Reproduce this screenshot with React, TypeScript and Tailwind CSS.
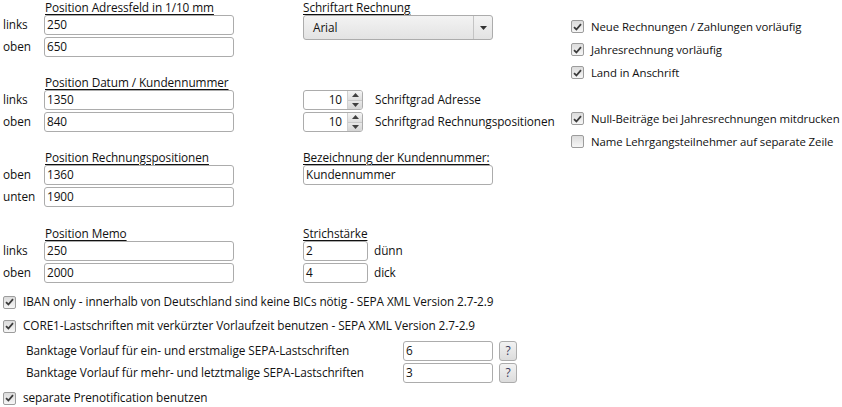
import type { ReactNode } from "react";

const FONT = "font-['Open_Sans','Noto_Sans',sans-serif]";

function Heading({ children, className = "" }: { children: ReactNode; className?: string }) {
  return (
    <div className={`h-[15px] whitespace-nowrap leading-[15px] underline underline-offset-[2px] ${className}`}>
      {children}
    </div>
  );
}

function TextBox({ value, className = "" }: { value: string; className?: string }) {
  return (
    <div
      className={`flex h-[20px] shrink-0 items-center rounded-[3px] border border-[#acacac] bg-white px-[2px] leading-none ${className}`}
    >
      {value}
    </div>
  );
}

function Spinner({ value }: { value: string }) {
  return (
    <div className="flex h-[20px] w-[60px] shrink-0 overflow-hidden rounded-[3px] border border-[#acacac] bg-white">
      <div className="flex flex-1 items-center justify-end pr-[5px] leading-none">{value}</div>
      <div className="flex w-[15px] flex-col border-l border-[#d0d0d0]">
        <div className="flex flex-1 items-center justify-center bg-gradient-to-b from-[#f4f4f4] to-[#dedede]">
          <svg width="7" height="4" viewBox="0 0 7 4">
            <path d="M0 4 L3.5 0 L7 4 Z" fill="#404040" />
          </svg>
        </div>
        <div className="flex flex-1 items-center justify-center border-t border-[#c8c8c8] bg-gradient-to-b from-[#e8e8e8] to-[#d4d4d4]">
          <svg width="7" height="4" viewBox="0 0 7 4">
            <path d="M0 0 L7 0 L3.5 4 Z" fill="#404040" />
          </svg>
        </div>
      </div>
    </div>
  );
}

function Check({ checked = true }: { checked?: boolean }) {
  return (
    <span className="flex h-[13px] w-[13px] shrink-0 items-center justify-center rounded-[2px] border border-[#9c9c9c] bg-gradient-to-b from-[#dcdcdc] to-[#f6f6f6]">
      {checked && (
        <svg width="9" height="8" viewBox="0 0 9 8">
          <path d="M1 4.2 L3.4 6.5 L8 1.2" fill="none" stroke="#3c3c3c" strokeWidth="1.8" />
        </svg>
      )}
    </span>
  );
}

function CheckRow({ label, checked = true, className = "" }: { label: string; checked?: boolean; className?: string }) {
  return (
    <div className={`flex h-[23px] items-center gap-[7px] whitespace-nowrap ${className}`}>
      <Check checked={checked} />
      <span>{label}</span>
    </div>
  );
}

function FieldRow({ label, value }: { label: string; value: string }) {
  return (
    <div className="flex items-center">
      <span className="w-[44px] shrink-0 pl-[3px]">{label}</span>
      <TextBox value={value} className="w-[190px]" />
    </div>
  );
}

function Section({ title, rows, className = "" }: { title: string; rows: [string, string][]; className?: string }) {
  return (
    <div className={className}>
      <Heading className="pl-[45px]">{title}</Heading>
      <div className="flex flex-col gap-[2px]">
        {rows.map(([label, value]) => (
          <FieldRow key={label + value} label={label} value={value} />
        ))}
      </div>
    </div>
  );
}

function HelpButton() {
  return (
    <div className="ml-[6px] flex h-[20px] w-[18px] shrink-0 items-center justify-center rounded-[3px] border border-[#acacac] bg-gradient-to-b from-[#f2f2f2] to-[#dcdcdc] text-[12px] text-[#3a3a5a]">
      ?
    </div>
  );
}

export default function App() {
  return (
    <div
      className={`h-[407px] w-[842px] overflow-hidden bg-white text-[11.8px] tracking-[-0.08px] text-[#111] ${FONT}`}
    >
      <div className="flex h-[290px]">
        <div className="w-[303px] shrink-0">
          <Section title="Position Adressfeld in 1/10 mm" rows={[["links", "250"], ["oben", "650"]]} />
          <Section
            className="mt-[18px]"
            title="Position Datum / Kundennummer"
            rows={[["links", "1350"], ["oben", "840"]]}
          />
          <Section
            className="mt-[18px]"
            title="Position Rechnungspositionen"
            rows={[["oben", "1360"], ["unten", "1900"]]}
          />
          <Section className="mt-[19px]" title="Position Memo" rows={[["links", "250"], ["oben", "2000"]]} />
        </div>

        <div className="w-[267px] shrink-0">
          <Heading>Schriftart Rechnung</Heading>
          <div className="flex h-[25px] w-[190px] overflow-hidden rounded-[3px] border border-[#acacac] bg-gradient-to-b from-[#f3f3f3] to-[#e3e3e3]">
            <div className="flex flex-1 items-center pl-[9px]">Arial</div>
            <div className="flex w-[19px] items-center justify-center border-l border-[#c4c4c4]">
              <svg width="7" height="4" viewBox="0 0 7 4">
                <path d="M0 0 L7 0 L3.5 4 Z" fill="#333" />
              </svg>
            </div>
          </div>

          <div className="mt-[50px] flex flex-col gap-[2px]">
            <div className="flex items-center whitespace-nowrap">
              <Spinner value="10" />
              <span className="ml-[12px]">Schriftgrad Adresse</span>
            </div>
            <div className="flex items-center whitespace-nowrap">
              <Spinner value="10" />
              <span className="ml-[12px]">Schriftgrad Rechnungspositionen</span>
            </div>
          </div>

          <Heading className="mt-[18px]">Bezeichnung der Kundennummer:</Heading>
          <TextBox value="Kundennummer" className="w-[190px]" />

          <Heading className="mt-[41px]">Strichstärke</Heading>
          <div className="flex flex-col gap-[2px]">
            <div className="flex items-center">
              <TextBox value="2" className="w-[65px]" />
              <span className="ml-[6px]">dünn</span>
            </div>
            <div className="flex items-center">
              <TextBox value="4" className="w-[65px]" />
              <span className="ml-[6px]">dick</span>
            </div>
          </div>
        </div>

        <div className="min-w-0 flex-1 pl-[1px] pt-[15px] text-[11.4px] tracking-[-0.08px]">
          <CheckRow label="Neue Rechnungen / Zahlungen vorläufig" />
          <CheckRow label="Jahresrechnung vorläufig" />
          <CheckRow label="Land in Anschrift" />
          <CheckRow className="mt-[23px]" label="Null-Beiträge bei Jahresrechnungen mitdrucken" />
          <CheckRow label="Name Lehrgangsteilnehmer auf separate Zeile" checked={false} />
        </div>
      </div>

      <div className="pl-[3px]">
        <CheckRow
          className="h-[24px] gap-[6px]"
          label="IBAN only - innerhalb von Deutschland sind keine BICs nötig - SEPA XML Version 2.7-2.9"
        />
        <CheckRow
          className="h-[24px] gap-[6px]"
          label="CORE1-Lastschriften mit verkürzter Vorlaufzeit benutzen - SEPA XML Version 2.7-2.9"
        />
        <div className="mt-[3px] flex flex-col gap-[2px]">
          <div className="flex items-center whitespace-nowrap">
            <span className="w-[400px] shrink-0 pl-[23px]">
              Banktage Vorlauf für ein- und erstmalige SEPA-Lastschriften
            </span>
            <TextBox value="6" className="w-[90px]" />
            <HelpButton />
          </div>
          <div className="flex items-center whitespace-nowrap">
            <span className="w-[400px] shrink-0 pl-[23px]">
              Banktage Vorlauf für mehr- und letztmalige SEPA-Lastschriften
            </span>
            <TextBox value="3" className="w-[90px]" />
            <HelpButton />
          </div>
        </div>
        <CheckRow className="mt-[3px] h-[24px] gap-[6px]" label="separate Prenotification benutzen" />
      </div>
    </div>
  );
}
